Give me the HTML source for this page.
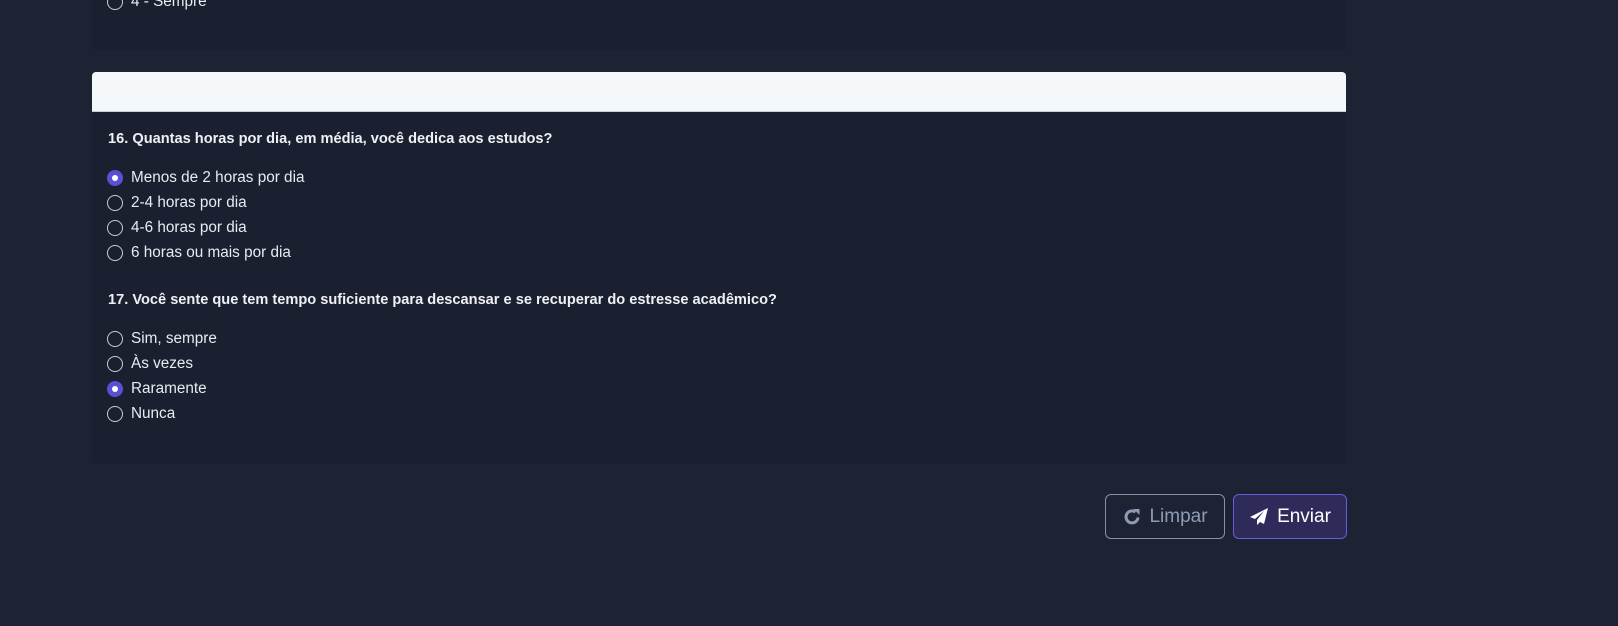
<!DOCTYPE html>
<html><head><style>
body{margin:0;width:1618px;height:626px;background:#1e2334;font-family:"Liberation Sans",sans-serif;overflow:hidden;position:relative;color:#e8ebf2}
.card{position:absolute;left:92px;width:1254px;background:#1b2030;border-radius:4px}
.q{position:absolute;left:108px;font-size:14.6px;font-weight:bold;color:#eef0f5}
.o{position:absolute;left:107px;font-size:15.3px;color:#e8ebf2;display:flex;align-items:center;height:18px}
.r{width:16px;height:16px;border:1.5px solid #c8ccd6;border-radius:50%;box-sizing:border-box;margin-right:8px;background:#1b2030}
.r.on{border:none;background:#5b4fd6;display:flex;align-items:center;justify-content:center}
.r.on:after{content:"";width:6px;height:6px;border-radius:50%;background:#fff}
.btn{position:absolute;top:494px;height:45px;border-radius:6px;box-sizing:border-box;display:flex;align-items:center;justify-content:center;font-size:19px}
</style></head><body>
<div class="card" style="top:-10px;height:60px"></div>
<div class="o" style="top:-7px"><span class="r"></span>4 - Sempre</div>
<div class="card" style="top:72px;height:392px"></div>
<div style="position:absolute;left:92px;top:72px;width:1254px;height:39px;background:#f4f8fb;border-bottom:1px solid #c9cdd4;border-radius:4px 4px 0 0"></div>
<div class="q" style="top:131px">16. Quantas horas por dia, em média, você dedica aos estudos?</div>
<div class="o" style="top:169px"><span class="r on"></span>Menos de 2 horas por dia</div>
<div class="o" style="top:194px"><span class="r"></span>2-4 horas por dia</div>
<div class="o" style="top:219px"><span class="r"></span>4-6 horas por dia</div>
<div class="o" style="top:244px"><span class="r"></span>6 horas ou mais por dia</div>
<div class="q" style="top:292px">17. Você sente que tem tempo suficiente para descansar e se recuperar do estresse acadêmico?</div>
<div class="o" style="top:330px"><span class="r"></span>Sim, sempre</div>
<div class="o" style="top:355px"><span class="r"></span>Às vezes</div>
<div class="o" style="top:380px"><span class="r on"></span>Raramente</div>
<div class="o" style="top:405px"><span class="r"></span>Nunca</div>
<div class="btn" style="left:1105px;width:120px;border:1px solid #8a90a0;color:#8d9bb5">
<svg width="20" height="20" viewBox="0 0 20 20" style="margin-right:7px"><path d="M16 10.5A6 6 0 1 1 13.5 5" fill="none" stroke="#8d9bb5" stroke-width="3"/><path d="M11.5 2h6v6z" fill="#8d9bb5"/></svg>Limpar</div>
<div class="btn" style="left:1233px;width:114px;border:1px solid #6a5ae0;background:#2e2b5a;color:#fff">
<svg width="20" height="20" viewBox="0 0 20 20" style="margin-right:8px"><path d="M19 1L1 10l5 2 9-8-7 9v5l3-3 4 2z" fill="#fff"/></svg>Enviar</div>
</body></html>
